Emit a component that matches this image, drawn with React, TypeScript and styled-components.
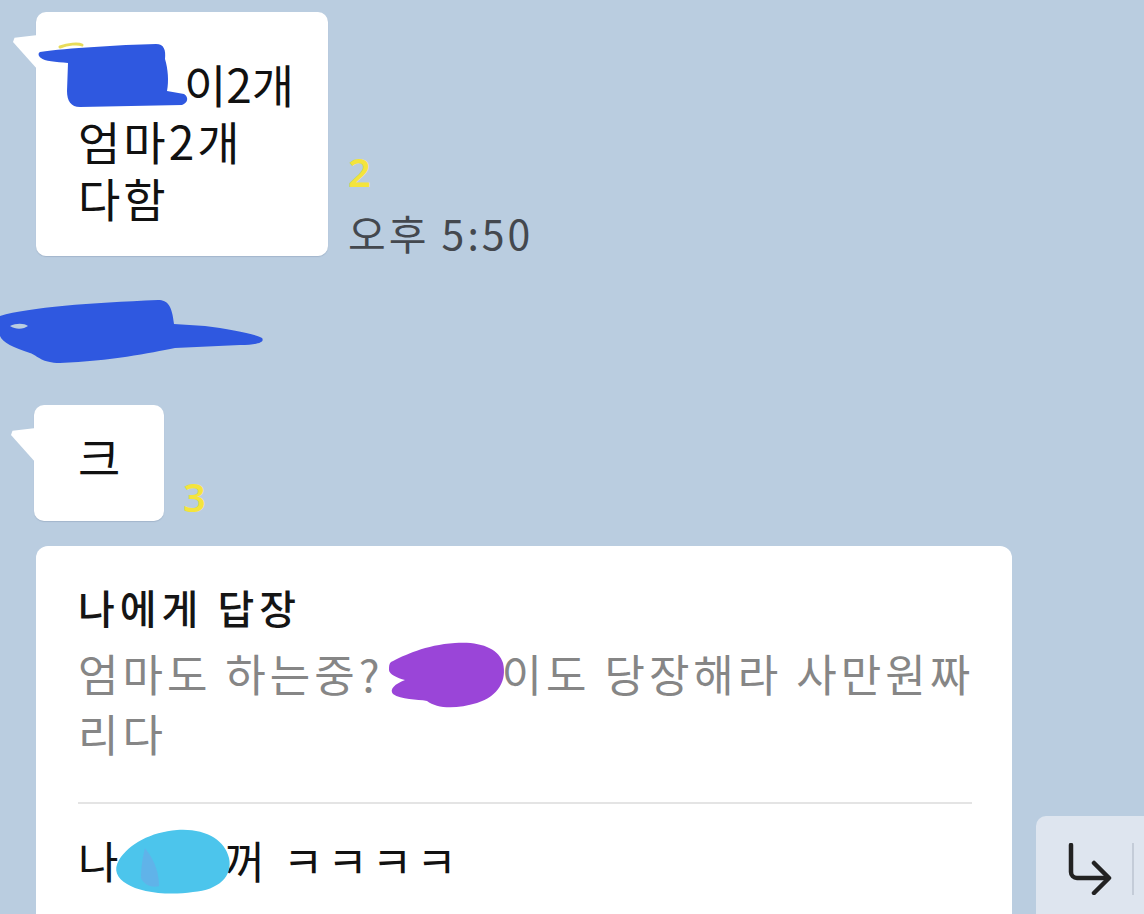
import React from "react";
import styled, { createGlobalStyle } from "styled-components";

const Global = createGlobalStyle`
  html, body { margin: 0; padding: 0; }
  body {
    background: #bacde0;
    font-family: "Noto Sans CJK KR", "Noto Sans", sans-serif;
    overflow: hidden;
  }
`;

const Screen = styled.div`
  width: 1144px;
  height: 914px;
  overflow: hidden;
  background: #bacde0;
  box-sizing: border-box;
  padding: 12px 0 0 36px;
  display: flex;
  flex-direction: column;
  align-items: flex-start;
`;

const Row = styled.div<{ $mt?: number; $gap?: number }>`
  display: flex;
  align-items: flex-end;
  gap: ${(p) => p.$gap ?? 20}px;
  margin-top: ${(p) => p.$mt ?? 0}px;
  flex-shrink: 0;
`;

const Bubble = styled.div<{ $w?: number; $pad: string; $ml?: number }>`
  position: relative;
  box-sizing: border-box;
  width: ${(p) => (p.$w ? `${p.$w}px` : "auto")};
  margin-left: ${(p) => p.$ml ?? 0}px;
  padding: ${(p) => p.$pad};
  background: #ffffff;
  border-radius: 10px;
  box-shadow: 0 1px 1px rgba(60, 80, 110, 0.18);
  flex-shrink: 0;
  color: #111;
  font-size: 46px;
  line-height: 57px;
  letter-spacing: 3px;

  &::before {
    content: "";
    position: absolute;
    left: -23px;
    top: 23px;
    width: 25px;
    height: 35px;
    background: #ffffff;
    clip-path: polygon(0 20%, 6% 8%, 100% 0, 100% 100%);
  }
`;

const Line = styled.div<{ $ls?: number }>`
  white-space: nowrap;
  ${(p) => (p.$ls !== undefined ? `letter-spacing: ${p.$ls}px;` : "")}
`;

const Meta = styled.div`
  display: flex;
  flex-direction: column;
  align-items: flex-start;
  gap: 16px;
`;

const Count = styled.div<{ $mb?: number }>`
  color: #f4e43c;
  font-family: "Noto Sans", "Noto Sans CJK KR", sans-serif;
  font-size: 40px;
  font-weight: 600;
  line-height: 40px;
  margin-bottom: ${(p) => p.$mb ?? 0}px;
`;

const Time = styled.div`
  color: #44484e;
  font-size: 41px;
  line-height: 48px;
  letter-spacing: 3px;
  white-space: nowrap;
`;

const NameRow = styled.div`
  margin: 40px 0 0 -36px;
  height: 70px;
  width: 270px;
  flex-shrink: 0;
  display: flex;
  align-items: center;
`;

const Redact = styled.span<{ $w: number; $h: number }>`
  position: relative;
  display: inline-block;
  vertical-align: top;
  width: ${(p) => p.$w}px;
  height: ${(p) => p.$h}px;
`;

const Scribble = styled.svg<{ $l: number; $t: number }>`
  position: absolute;
  left: ${(p) => p.$l}px;
  top: ${(p) => p.$t}px;
  overflow: visible;
`;

const ReplyBubble = styled.div`
  box-sizing: border-box;
  width: 976px;
  flex-shrink: 0;
  background: #ffffff;
  border-radius: 12px;
  padding: 35px 40px 40px 42px;
  display: flex;
  flex-direction: column;
`;

const ReplyTitle = styled.div`
  color: #151515;
  font-size: 40px;
  font-weight: 500;
  line-height: 52px;
  letter-spacing: 5px;
  white-space: nowrap;
`;

const Quote = styled.div`
  margin-top: 10px;
  color: #868686;
  font-size: 44px;
  line-height: 60px;
  letter-spacing: 4px;
  white-space: nowrap;
`;

const Divider = styled.div`
  margin-top: 39px;
  height: 2px;
  background: #e4e4e4;
`;

const ReplyText = styled.div`
  margin-top: 26px;
  color: #111;
  font-size: 44px;
  line-height: 60px;
  letter-spacing: 4px;
  white-space: nowrap;
`;

const Laugh = styled.span`
  letter-spacing: 4px;
`;

const ActionButton = styled.div`
  box-sizing: border-box;
  width: 120px;
  height: 114px;
  flex-shrink: 0;
  background: #dee5ef;
  border-radius: 10px 0 0 10px;
  display: flex;
  align-items: center;
  padding: 0 0 8px 32px;
  gap: 20px;
`;

const Bar = styled.div`
  width: 2px;
  height: 52px;
  background: #c4ccd8;
`;

const BlueBlob1 = () => (
  <Scribble $l={-40} $t={-16} width="152" height="72" viewBox="0 0 152 72">
    <path d="M22 8 C30 5 40 4 44 6" stroke="#e8dc5a" strokeWidth="3" fill="none" strokeLinecap="round" />
    <path
      fill="#2f58e0"
      d="M2 13 C30 9 80 6 118 5 C126 5 128 11 127 20 C130 30 131 42 129 52 L146 55 C151 58 150 64 144 66 L42 68 C33 68 29 62 29 52 L30 24 C18 23 6 22 3 19 C0 17 0 14 2 13 Z"
    />
  </Scribble>
);

const NameBlob = () => (
  <svg width="265" height="70" viewBox="0 0 265 70">
    <path
      fill="#2f58e0"
      d="M0 20 C30 11 90 7 158 4 C168 4 172 10 174 28 L205 30 C230 33 255 38 262 42 C265 46 258 49 240 49 L175 52 C150 57 110 65 60 67 C42 67 38 60 30 57 C14 52 2 46 0 40 Z"
    />
    <path fill="#bacde0" d="M10 30 C16 27 24 27 28 30 C24 33 16 34 10 30 Z" />
  </svg>
);

const PurpleBlob = () => (
  <Scribble $l={3} $t={-3} width="120" height="72" viewBox="0 0 120 72">
    <path
      fill="#9a45d8"
      d="M4 22 C18 15 38 5 68 3 C94 1 112 9 116 23 C120 40 112 56 90 63 C70 69 50 69 40 61 C30 59 14 60 6 54 C2 49 8 44 18 40 C10 38 2 34 2 30 C2 26 2 24 4 22 Z"
    />
  </Scribble>
);

const CyanBlob = () => (
  <Scribble $l={-11} $t={-4} width="124" height="72" viewBox="0 0 124 72">
    <path
      fill="#4cc5ec"
      d="M8 34 C18 18 40 6 66 4 C94 2 114 14 118 32 C122 50 108 64 82 66 C56 70 28 66 16 58 C6 52 2 44 8 34 Z"
    />
    <path fill="#7a9de6" opacity="0.45" d="M34 22 C40 30 48 42 48 60 C42 62 34 60 30 52 C30 40 32 30 34 22 Z" />
  </Scribble>
);

const ReplyArrow = () => (
  <svg width="44" height="52" viewBox="0 0 44 52" fill="none">
    <path d="M3 2 V29 a6 6 0 0 0 6 6 H40" stroke="#222" strokeWidth="4.5" strokeLinecap="round" strokeLinejoin="round" />
    <path d="M26 20 L41 35 L26 50" stroke="#222" strokeWidth="4.5" strokeLinecap="round" strokeLinejoin="round" />
  </svg>
);

export default function App() {
  return (
    <>
      <Global />
      <Screen>
        <Row $gap={20}>
          <Bubble $w={292} $pad="43px 10px 30px 42px">
            <Line $ls={0}>
              <Redact $w={106} $h={57}>
                <BlueBlob1 />
              </Redact>
              이2개
            </Line>
            <Line>엄마2개</Line>
            <Line>다함</Line>
          </Bubble>
          <Meta>
            <Count>2</Count>
            <Time>오후 5:50</Time>
          </Meta>
        </Row>

        <NameRow>
          <NameBlob />
        </NameRow>

        <Row $mt={39} $gap={19}>
          <Bubble $w={130} $ml={-2} $pad="23px 10px 36px 44px">
            <Line>크</Line>
          </Bubble>
          <Count $mb={4}>3</Count>
        </Row>

        <Row $mt={25} $gap={24}>
          <ReplyBubble>
            <ReplyTitle>나에게 답장</ReplyTitle>
            <Quote>
              엄마도 하는중?
              <Redact $w={118} $h={60}>
                <PurpleBlob />
              </Redact>
              이도 당장해라 사만원짜
              <br />
              리다
            </Quote>
            <Divider />
            <ReplyText>
              나
              <Redact $w={102} $h={60}>
                <CyanBlob />
              </Redact>
              꺼 <Laugh>ㅋㅋㅋㅋ</Laugh>
            </ReplyText>
          </ReplyBubble>
          <ActionButton>
            <ReplyArrow />
            <Bar />
          </ActionButton>
        </Row>
      </Screen>
    </>
  );
}
